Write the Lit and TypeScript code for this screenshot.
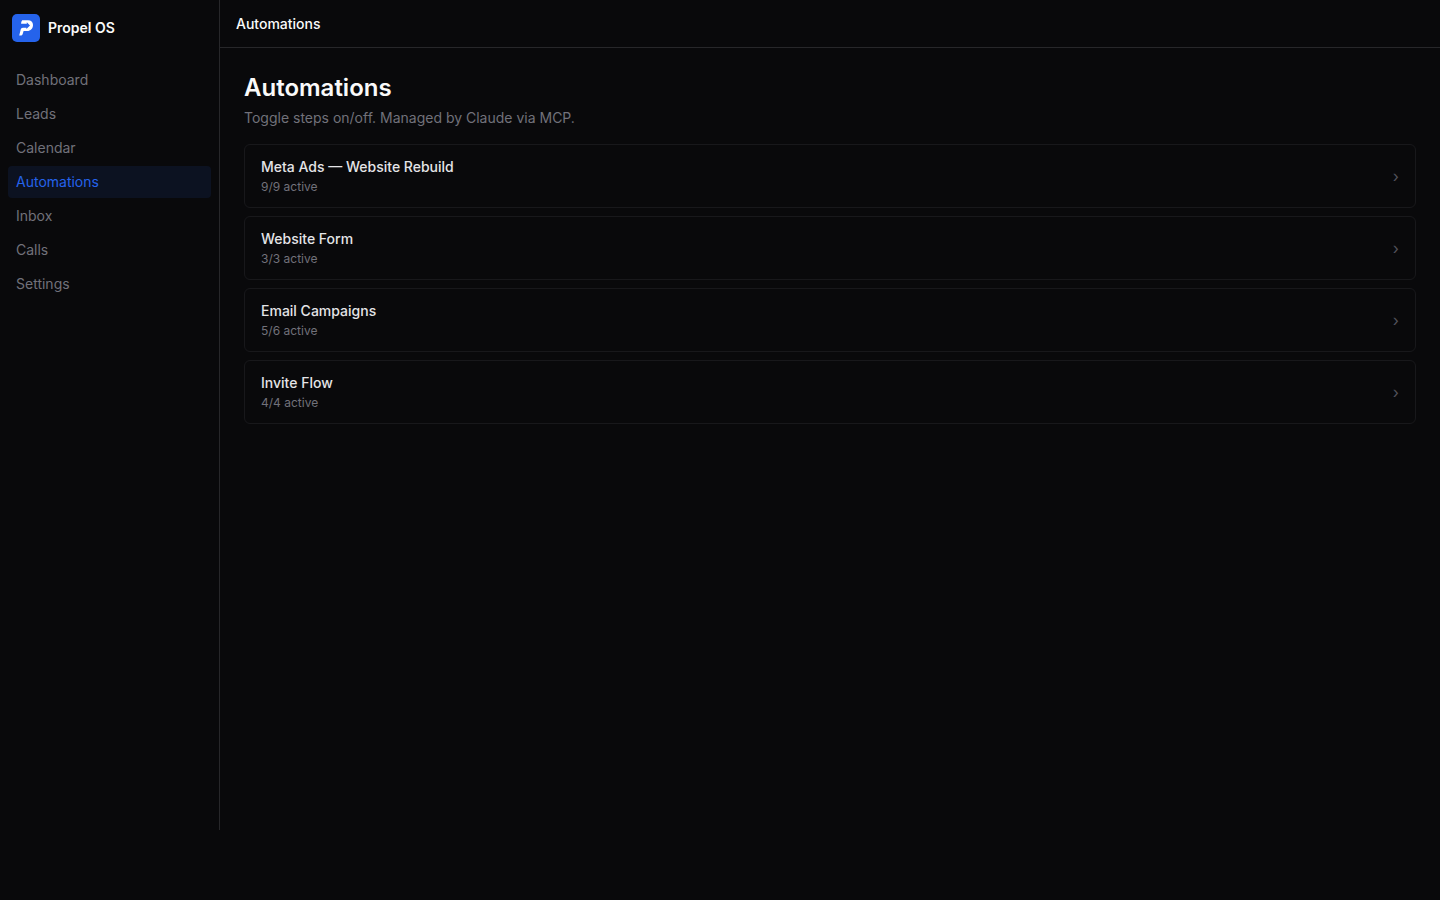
import { LitElement, html, css } from "lit";
import { customElement, property, state } from "lit/decorators.js";
import { classMap } from "lit/directives/class-map.js";

interface Flow {
  name: string;
  active: number;
  total: number;
}

@customElement("flow-card")
class FlowCard extends LitElement {
  @property({ attribute: false }) flow!: Flow;

  static styles = css`
    :host {
      display: block;
    }
    .card {
      box-sizing: border-box;
      display: flex;
      align-items: center;
      justify-content: space-between;
      width: 100%;
      padding: 12px 16px;
      border: 1px solid #18181b;
      border-radius: 6px;
      background: transparent;
      color: inherit;
      font: inherit;
      text-align: left;
      cursor: pointer;
    }
    .card:hover {
      border-color: #27272a;
    }
    .text {
      display: flex;
      flex-direction: column;
      gap: 2px;
    }
    .name {
      font-size: 14px;
      line-height: 20px;
      font-weight: 500;
      color: #e4e4e7;
    }
    .count {
      font-size: 12px;
      line-height: 16px;
      color: #71717a;
    }
    .chevron {
      font-size: 16px;
      line-height: 24px;
      color: #52525b;
    }
  `;

  render() {
    return html`
      <button class="card" type="button">
        <span class="text">
          <span class="name">${this.flow.name}</span>
          <span class="count">${this.flow.active}/${this.flow.total} active</span>
        </span>
        <span class="chevron" aria-hidden="true">›</span>
      </button>
    `;
  }
}

@customElement("app-root")
class AppRoot extends LitElement {
  @state() private current = "Automations";

  private pages = ["Dashboard", "Leads", "Calendar", "Automations", "Inbox", "Calls", "Settings"];

  private flows: Flow[] = [
    { name: "Meta Ads — Website Rebuild", active: 9, total: 9 },
    { name: "Website Form", active: 3, total: 3 },
    { name: "Email Campaigns", active: 5, total: 6 },
    { name: "Invite Flow", active: 4, total: 4 },
  ];

  static styles = css`
    :host {
      box-sizing: border-box;
      display: flex;
      min-height: 100vh;
      padding-bottom: 70px;
      background: #09090b;
      color: #fafafa;
      font-family: Inter, sans-serif;
      font-size: 14px;
      line-height: 20px;
    }
    .sidebar {
      box-sizing: border-box;
      flex: none;
      width: 220px;
      border-right: 1px solid #27272a;
    }
    .brand {
      display: flex;
      align-items: center;
      gap: 8px;
      height: 56px;
      padding: 0 12px;
      font-weight: 600;
    }
    .logo {
      display: block;
      width: 28px;
      height: 28px;
    }
    .nav {
      display: flex;
      flex-direction: column;
      gap: 2px;
      padding: 8px;
    }
    .link {
      padding: 6px 8px;
      border-radius: 4px;
      color: #71717a;
      text-decoration: none;
    }
    .link.current {
      background: rgba(37, 99, 235, 0.1);
      color: #2563eb;
    }
    .main {
      flex: 1;
      min-width: 0;
    }
    .topbar {
      display: flex;
      align-items: center;
      height: 47px;
      padding: 0 16px;
      border-bottom: 1px solid #27272a;
      font-weight: 500;
    }
    .content {
      padding: 24px;
    }
    .title {
      margin: 0;
      font-size: 24px;
      line-height: 32px;
      font-weight: 600;
    }
    .hint {
      margin: 4px 0 16px;
      color: #71717a;
    }
    .list {
      display: grid;
      gap: 8px;
    }
  `;

  private open(event: Event, page: string) {
    event.preventDefault();
    this.current = page;
  }

  render() {
    return html`
      <aside class="sidebar">
        <div class="brand">
          <svg class="logo" viewBox="0 0 28 28" aria-hidden="true">
            <rect width="28" height="28" rx="5" fill="#2563eb" />
            <path
              d="M10.2 6.2H16C19.1 6.2 21 8.2 21 11C21 14.6 18.6 17 15.2 17H11.6L10.6 20.3C10.3 21.2 9.6 21.6 8.6 21.6H7.2L8.7 15.6C9 14.4 9.7 13.7 10.9 13.7H14.4V15L18 11.4L14.8 8.2V9.8H9.1C9.1 8.2 9.5 7 10.2 6.2Z"
              fill="#fff"
            />
          </svg>
          <span>Propel OS</span>
        </div>
        <nav class="nav">
          ${this.pages.map(
            (page) => html`
              <a
                href="#${page.toLowerCase()}"
                class=${classMap({ link: true, current: page === this.current })}
                @click=${(event: Event) => this.open(event, page)}
                >${page}</a
              >
            `,
          )}
        </nav>
      </aside>
      <div class="main">
        <header class="topbar">${this.current}</header>
        <main class="content">
          <h1 class="title">Automations</h1>
          <p class="hint">Toggle steps on/off. Managed by Claude via MCP.</p>
          <div class="list">${this.flows.map((flow) => html`<flow-card .flow=${flow}></flow-card>`)}</div>
        </main>
      </div>
    `;
  }
}
